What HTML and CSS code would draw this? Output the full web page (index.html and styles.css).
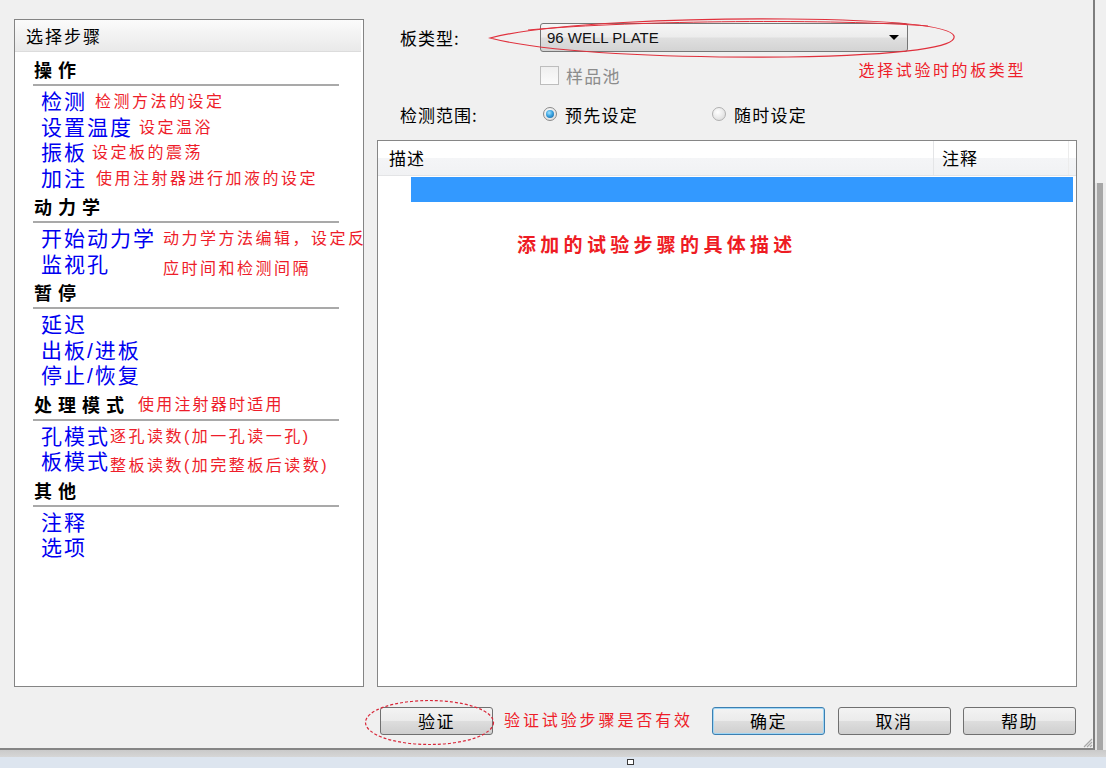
FILE: index.html
```html
<!DOCTYPE html>
<html lang="zh-CN">
<head>
<meta charset="utf-8">
<title>选择步骤</title>
<link rel="stylesheet" href="styles.css">
</head>
<body>
<div class="screen">
  <div class="dialog">
    <div class="main">
      <div class="steps">
        <div class="steps-head">选择步骤</div>

        <div class="g-title">操作</div>
        <ul class="g-items">
          <li><span class="item">检测</span><span class="note m8">检测方法的设定</span></li>
          <li><span class="item">设置温度</span><span class="note m6">设定温浴</span></li>
          <li><span class="item">振板</span><span class="note m5">设定板的震荡</span></li>
          <li><span class="item">加注</span><span class="note m9">使用注射器进行加液的设定</span></li>
        </ul>

        <div class="g-title">动力学</div>
        <ul class="g-items">
          <li><span class="item">开始动力学</span><span class="note m7">动力学方法编辑，设定反</span></li>
          <li><span class="item">监视孔</span><span class="note m53 low">应时间和检测间隔</span></li>
        </ul>

        <div class="g-title">暂停</div>
        <ul class="g-items">
          <li><span class="item">延迟</span></li>
          <li><span class="item">出板/进板</span></li>
          <li><span class="item">停止/恢复</span></li>
        </ul>

        <div class="g-title">处理模式<span class="note title-note">使用注射器时适用</span></div>
        <ul class="g-items">
          <li><span class="item">孔模式</span><span class="note m0">逐孔读数(加一孔读一孔)</span></li>
          <li><span class="item">板模式</span><span class="note m0 low">整板读数(加完整板后读数)</span></li>
        </ul>

        <div class="g-title">其他</div>
        <ul class="g-items">
          <li><span class="item">注释</span></li>
          <li><span class="item">选项</span></li>
        </ul>
      </div>

      <div class="right">
        <div class="form">
          <div class="row row-type">
            <span class="label">板类型:</span>
            <div class="combo">
              <span class="combo-text">96 WELL PLATE</span>
              <span class="combo-arrow"></span>
              <svg class="ring ring-combo" width="470" height="44" viewBox="0 0 470 44">
                <path d="M2,22 C60,7 200,2 300,3 C400,4 462,9 466,20 C469,31 420,39 300,41 C180,42 60,37 2,22 Z" fill="none" stroke="#e0303c" stroke-width="1.2"/>
                <path d="M40,14 C150,4 350,3 440,10" fill="none" stroke="#e0303c" stroke-width="1"/>
              </svg>
            </div>
          </div>
          <div class="row row-check">
            <span class="checkbox"></span>
            <span class="check-label">样品池</span>
            <span class="note combo-note">选择试验时的板类型</span>
          </div>
          <div class="row row-range">
            <span class="label">检测范围:</span>
            <span class="radio checked"></span>
            <span class="radio-label">预先设定</span>
            <span class="radio second"></span>
            <span class="radio-label">随时设定</span>
          </div>
        </div>

        <div class="list">
          <div class="list-head">
            <div class="col col1">描述</div>
            <div class="col col2">注释</div>
          </div>
          <div class="sel-row"></div>
          <div class="list-note">添加的试验步骤的具体描述</div>
        </div>
      </div>
    </div>

    <div class="buttons">
      <div class="verify-wrap">
        <button class="btn">验证</button>
        <svg class="ring ring-verify" width="131" height="47" viewBox="0 0 131 47">
          <ellipse cx="65.5" cy="23.5" rx="64" ry="22" fill="none" stroke="#d8283a" stroke-width="1.2" stroke-dasharray="3 2"/>
        </svg>
      </div>
      <span class="note verify-note">验证试验步骤是否有效</span>
      <div class="btn-group">
        <button class="btn default">确定</button>
        <button class="btn">取消</button>
        <button class="btn">帮助</button>
      </div>
    </div>

    <svg class="grip" width="11" height="11" viewBox="0 0 11 11">
      <path d="M10,2 L2,10 M10,5 L5,10 M10,8 L8,10" stroke="#a8a8a8" stroke-width="1.2"/>
    </svg>
  </div>
  <div class="side-strip"></div>
  <div class="bottom-strip"><span class="handle"></span></div>
</div>
</body>
</html>
```

FILE: styles.css
```css
html, body {
  margin: 0;
  padding: 0;
}
body {
  width: 1106px;
  height: 768px;
  overflow: hidden;
  background: #f0f0f0;
  font-family: "Noto Sans CJK SC", "Noto Sans", sans-serif;
  color: #000;
}
.screen {
  display: grid;
  grid-template-columns: 1095px 11px;
  grid-template-rows: 750px 18px;
  width: 1106px;
  height: 768px;
}
.dialog {
  position: relative;
  box-sizing: border-box;
  border-right: 2px solid #7e7e7e;
  border-bottom: 2px solid #858585;
  padding: 19px 0 0 14px;
  background: #f0f0f0;
}
.main {
  display: flex;
  height: 668px;
}

/* left steps panel */
.steps {
  box-sizing: border-box;
  width: 350px;
  height: 668px;
  background: #fff;
  border: 1px solid #848484;
}
.steps-head {
  height: 32px;
  line-height: 32px;
  margin-right: 2px;
  padding-left: 11px;
  font-size: 17px;
  letter-spacing: 2px;
  background: linear-gradient(#fbfbfb, #e9e9e9);
  border-bottom: 1px solid #dcdcdc;
  box-sizing: border-box;
}
.g-title {
  margin-left: 18px;
  width: 306px;
  box-sizing: border-box;
  padding-left: 1px;
  height: 32px;
  line-height: 30px;
  font-size: 18px;
  font-weight: 700;
  letter-spacing: 6px;
  border-bottom: 2px solid #a9a9a9;
  white-space: nowrap;
}
.steps-head + .g-title {
  margin-top: 2px;
}
.g-items {
  list-style: none;
  margin: 0;
  padding: 3px 0 0 26px;
}
.g-items li {
  height: 25.5px;
  line-height: 25.5px;
  white-space: nowrap;
}
.item {
  display: inline-block;
  height: 25.5px;
  line-height: 25.5px;
  vertical-align: top;
  font-family: "Liberation Sans", "Noto Sans CJK SC", sans-serif;
  font-size: 21px;
  letter-spacing: 2px;
  color: #0000f0;
}
.note {
  display: inline-block;
  height: 22px;
  line-height: 22px;
  font-family: "Liberation Sans", "Noto Sans CJK SC", sans-serif;
  font-size: 16px;
  letter-spacing: 2.5px;
  color: #ee1d2a;
  vertical-align: top;
  margin-top: 2px;
}
.m0 { margin-left: 0; }
.m5 { margin-left: 5px; }
.m6 { margin-left: 6px; }
.m7 { margin-left: 7px; }
.m8 { margin-left: 8px; }
.m9 { margin-left: 9px; }
.m53 { margin-left: 53px; }
.note.low { margin-top: 6px; }
.title-note {
  font-weight: 400;
  letter-spacing: 2.2px;
  margin-left: 8px;
  margin-top: 5px;
}

/* right part */
.right {
  margin-left: 13px;
  width: 700px;
  display: flex;
  flex-direction: column;
}
.form {
  height: 121px;
  flex: none;
}
.row {
  display: flex;
  align-items: center;
}
.label {
  box-sizing: border-box;
  width: 163px;
  padding-left: 23px;
  font-size: 17px;
  letter-spacing: 1px;
  flex: none;
}
.row-type {
  margin-top: 4px;
  height: 29px;
}
.combo {
  position: relative;
  box-sizing: border-box;
  width: 368px;
  height: 29px;
  border: 1px solid #767676;
  border-radius: 3px;
  background: linear-gradient(#f6f6f6 0%, #ececec 48%, #dfdfdf 52%, #d3d3d3 100%);
  display: flex;
  align-items: center;
}
.combo-text {
  padding-left: 6px;
  font-family: "Liberation Sans", Arial, sans-serif;
  font-size: 15px;
  color: #111;
}
.combo-arrow {
  margin-left: auto;
  margin-right: 8px;
  width: 0;
  height: 0;
  border-left: 5px solid transparent;
  border-right: 5px solid transparent;
  border-top: 5px solid #000;
}
.ring {
  position: absolute;
  pointer-events: none;
}
.ring-combo {
  left: -53px;
  top: -8px;
}
.row-check {
  margin-top: 14px;
  height: 19px;
  padding-left: 163px;
}
.checkbox {
  box-sizing: border-box;
  width: 19px;
  height: 19px;
  border: 1px solid #bdbdbd;
  background: linear-gradient(#efefef, #fbfbfb);
  flex: none;
}
.check-label {
  margin-left: 7px;
  font-size: 17px;
  letter-spacing: 1.2px;
  color: #8c8c8c;
}
.combo-note {
  margin-left: 238px;
  margin-top: -9px;
  letter-spacing: 2.6px;
}
.row-range {
  margin-top: 17px;
  height: 24px;
}
.radio {
  box-sizing: border-box;
  width: 14px;
  height: 14px;
  border-radius: 50%;
  border: 1px solid #9a9a9a;
  background: radial-gradient(circle at 40% 35%, #ffffff, #d6d6d6);
  margin-left: 3px;
  flex: none;
  display: flex;
  align-items: center;
  justify-content: center;
}
.radio.checked {
  border-color: #8a8a8a;
}
.radio.checked::after {
  content: "";
  width: 8px;
  height: 8px;
  border-radius: 50%;
  background: radial-gradient(circle at 40% 35%, #a6e4ff 0%, #3aa3e0 45%, #0f5a99 100%);
}
.radio.second {
  margin-left: 74px;
  border-color: #b0b0b0;
}
.radio-label {
  margin-left: 8px;
  font-size: 17px;
  letter-spacing: 1.25px;
}

/* list view */
.list {
  flex: 1;
  box-sizing: border-box;
  border: 1px solid #868686;
  background: #fff;
}
.list-head {
  display: flex;
  height: 35px;
  box-sizing: border-box;
  background: linear-gradient(#ffffff 0%, #ffffff 50%, #f4f5f7 50%, #f1f2f4 100%);
  border-bottom: 1px solid #e3e4e6;
}
.col {
  box-sizing: border-box;
  line-height: 34px;
  font-size: 17px;
  letter-spacing: 1px;
}
.col1 {
  width: 556px;
  padding-left: 11px;
  border-right: 1px solid #e4e5e7;
}
.col2 {
  width: 135px;
  padding-left: 8px;
  border-right: 1px solid #ececec;
}
.sel-row {
  margin: 1px 3px 0 33px;
  height: 25px;
  background: #3399ff;
}
.list-note {
  margin-top: 29px;
  padding-left: 139px;
  line-height: 26px;
  font-size: 19px;
  font-weight: 700;
  letter-spacing: 4.3px;
  color: #ee1c24;
}

/* buttons */
.buttons {
  display: flex;
  align-items: center;
  margin-top: 20px;
  height: 28px;
  padding-left: 366px;
  padding-right: 17px;
}
.verify-wrap {
  position: relative;
  display: flex;
}
.ring-verify {
  left: -16px;
  top: -8px;
}
.btn {
  box-sizing: border-box;
  width: 113px;
  height: 28px;
  border: 1px solid #707070;
  border-radius: 3px;
  background: linear-gradient(#f3f3f3 0%, #ebebeb 48%, #dddddd 52%, #cfcfcf 100%);
  font-family: "Noto Sans CJK SC", sans-serif;
  font-size: 17px;
  letter-spacing: 1.5px;
  color: #000;
  padding: 0;
  line-height: 26px;
}
.btn.default {
  border-color: #3c7fb1;
  box-shadow: inset 0 0 0 1px #9fd6f5;
}
.verify-note {
  margin-left: 11px;
  margin-top: 0;
  letter-spacing: 2.9px;
  font-size: 16px;
  vertical-align: middle;
}
.btn-group {
  margin-left: auto;
  display: flex;
  gap: 12.5px;
}
.grip {
  position: absolute;
  right: 0;
  bottom: 0;
}

/* window edges */
.side-strip {
  background:
    linear-gradient(to bottom, #f0f0f0 0, #f0f0f0 183px, transparent 183px),
    linear-gradient(to right, #e4e4e4 0, #e4e4e4 2px, #a7a7a7 2px, #a7a7a7 8px, #ececec 8px);
}
.bottom-strip {
  grid-column: 1 / 3;
  background: linear-gradient(to bottom, #cacaca 0, #d6d6d6 7px, #dde5ef 7px, #dde5ef 100%);
  padding: 9px 0 0 627px;
  box-sizing: border-box;
}
.handle {
  display: block;
  box-sizing: border-box;
  width: 7px;
  height: 6px;
  border: 1px solid #3a3a3a;
  background: #fff;
}
```
